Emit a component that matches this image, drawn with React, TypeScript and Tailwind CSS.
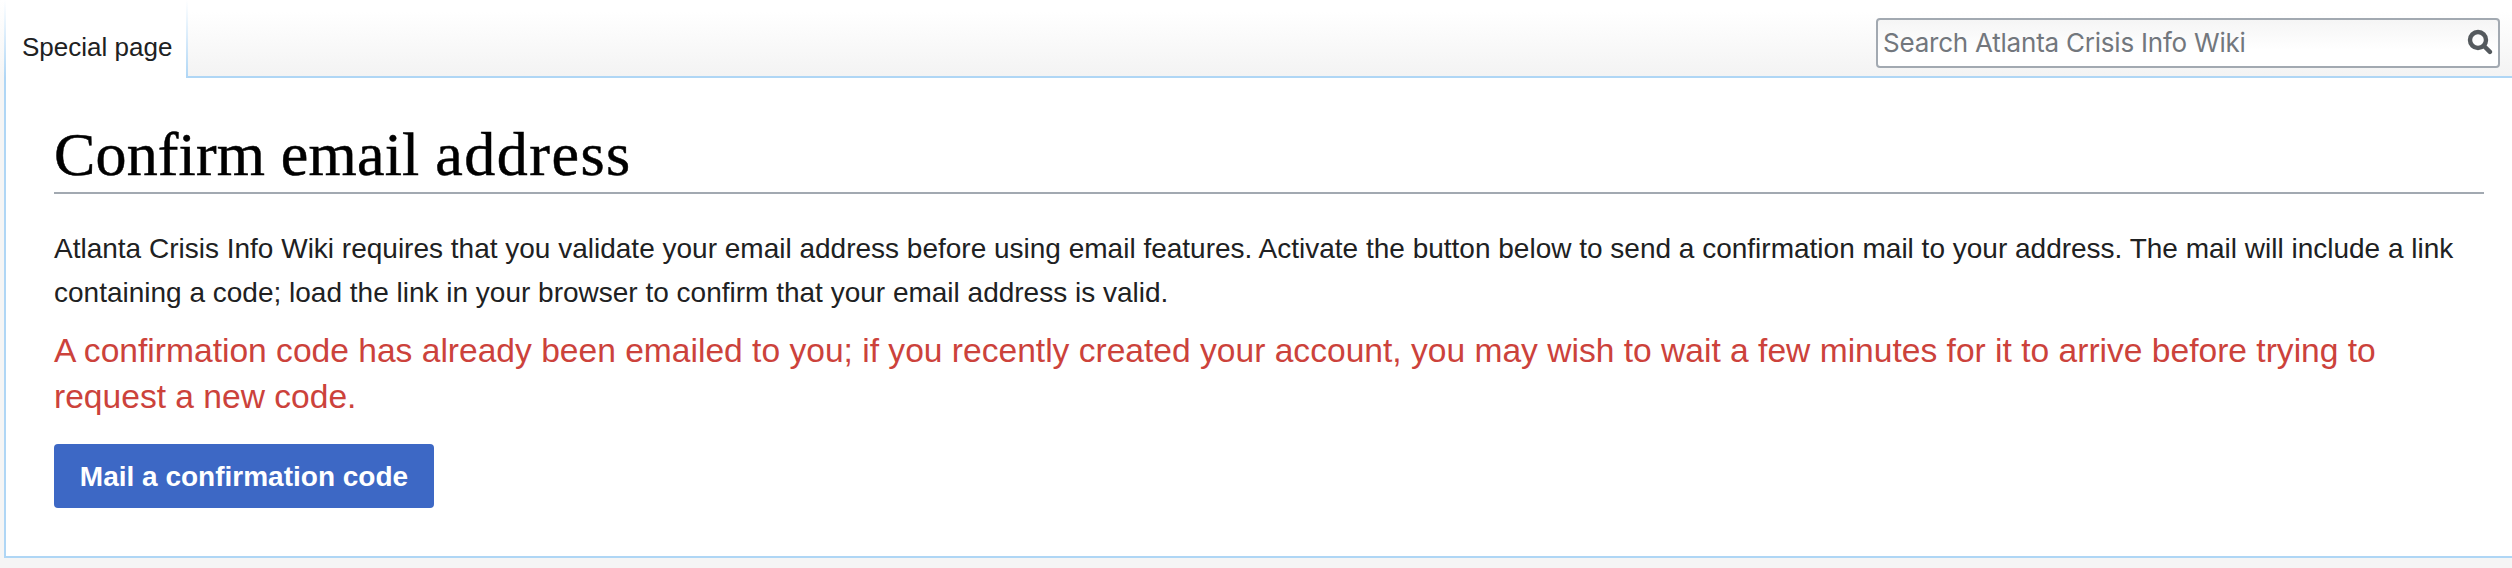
function SearchIcon() {
  return (
    <svg viewBox="0 0 26 26" className="h-[26px] w-[26px]" fill="none" stroke="#54595d">
      <circle cx="11" cy="11" r="8" strokeWidth="4.4" />
      <path d="M17 17l5.9 5.9" strokeWidth="4.4" strokeLinecap="round" />
    </svg>
  );
}

export default function App() {
  return (
    <div className="flex h-[568px] w-[2512px] flex-col overflow-hidden bg-[#f5f5f5] font-['Liberation_Sans',Arial,sans-serif] text-[#202122]">
      <header className="flex h-[78px] shrink-0 bg-linear-to-b from-white from-15% to-[#f3f3f3]">
        <div className="w-1 bg-linear-to-b from-white to-[#f5f5f5]" />
        <div className="w-[2px] bg-linear-to-b from-white to-[#afd6f5]" />
        <div className="h-[78px] w-[180px] bg-white pl-4 pt-[27px] text-[26px] leading-[40px]">
          <span className="whitespace-nowrap">Special page</span>
        </div>
        <div className="w-[2px] bg-linear-to-b from-white to-[#afd6f5]" />
        <div className="flex flex-1 items-start justify-end border-b-2 border-[#afd6f5] pr-3 pt-[18px]">
          <div className="flex h-[50px] w-[624px] items-start justify-between rounded-[4px] border-2 border-[#a2a9b1] bg-linear-to-b from-[#f5f5f5] to-white to-65% pl-[5px] pr-[5px]">
            <span className="mt-[4px] font-['Inter',sans-serif] text-[26px] leading-[38px] tracking-[-0.22px] text-[#72777d]">
              Search Atlanta Crisis Info Wiki
            </span>
            <span className="mt-[9px]">
              <SearchIcon />
            </span>
          </div>
        </div>
      </header>

      <main className="ml-1 h-[480px] shrink-0 border-b-2 border-l-2 border-[#afd6f5] bg-white pl-12 pr-7 pt-[40px]">
        <h1 className="h-[76px] border-b-2 border-[#a2a9b1] font-['Liberation_Serif',serif] text-[62px] leading-[72px] text-black [-webkit-text-stroke:0.5px_black]">
          <span className="tracking-[0.15px]">Confirm </span>
          <span className="tracking-[0.2px]">email </span>
          <span className="tracking-[1.5px]">address</span>
        </h1>
        <p className="mt-[33px] whitespace-nowrap text-[28px] leading-[44px]">
          Atlanta Crisis Info Wiki requires that you validate your email address before using email features. Activate the button below to send a confirmation mail to your address. The mail will include a link
          <br />
          containing a code; load the link in your browser to confirm that your email address is valid.
        </p>
        <p className="mt-[13px] whitespace-nowrap text-[33.6px] leading-[46px] text-[#cc423b]">
          A confirmation code has already been emailed to you; if you recently created your account, you may wish to wait a few minutes for it to arrive before trying to
          <br />
          request a new code.
        </p>
        <button className="mt-[24px] flex h-16 w-[380px] items-center justify-center whitespace-nowrap rounded-[4px] bg-[#3d68c5] pt-[2px] text-[28px] font-bold text-white">
          Mail a confirmation code
        </button>
      </main>
    </div>
  );
}
